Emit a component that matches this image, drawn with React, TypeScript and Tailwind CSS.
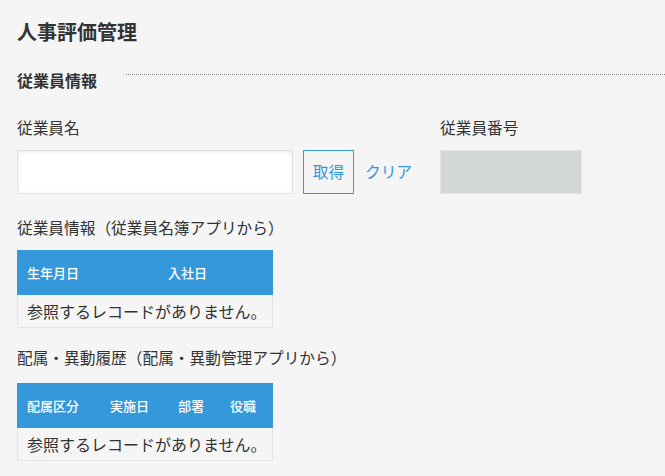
import React from 'react';

const font = { fontFamily: '"Noto Sans CJK JP", "Noto Sans", sans-serif' };

type RefTableProps = {
  columns: { label: string; width: string }[];
};

const RefTable = ({ columns }: RefTableProps) => {
  return (
    <div className="w-[256px]">
      <div className="flex h-[45px] items-center bg-[#3498db] pl-[10px] text-[13px] font-medium text-white">
        {columns.map((col) => (
          <div key={col.label} className={col.width}>
            {col.label}
          </div>
        ))}
      </div>
      <div className="flex h-[33px] items-center border border-t-0 border-[#e3e3e3] pl-[9px] text-[16px] text-[#333]">
        参照するレコードがありません。
      </div>
    </div>
  );
};

const App = () => {
  return (
    <div
      className="h-[476px] w-[665px] overflow-hidden bg-[#f5f5f5] pl-[17px] text-[#333]"
      style={font}
    >
      <h1 className="pt-[17px] text-[20px] font-bold leading-[30px]">人事評価管理</h1>

      <div className="mt-[22px] flex items-start">
        <h2 className="text-[16px] font-bold leading-[22px]">従業員情報</h2>
        <div className="mt-[5px] ml-[29px] flex-1 border-t border-dotted border-[#888]" />
      </div>

      <div className="mt-[26px] flex items-start">
        <div className="flex flex-col">
          <label className="text-[15.7px] leading-[22px]">従業員名</label>
          <div className="mt-[11px] flex items-center">
            <input
              className="h-[44px] w-[276px] border border-[#e3e3e3] bg-white shadow-[inset_0_1px_4px_rgba(0,0,0,0.08)] outline-none"
              type="text"
            />
            <button className="ml-[10px] h-[44px] w-[51px] border border-[#3498db] text-[15.7px] text-[#3498db]">
              取得
            </button>
            <span className="ml-[11px] text-[15.7px] text-[#3498db]">クリア</span>
          </div>
        </div>
        <div className="ml-[28px] flex flex-col">
          <label className="text-[15.7px] leading-[22px]">従業員番号</label>
          <div className="mt-[11px] h-[44px] w-[142px] border border-[#e3e3e3] bg-[#d4d7d7]" />
        </div>
      </div>

      <div className="mt-[22px] text-[15.7px] leading-[24px]">従業員情報（従業員名簿アプリから）</div>
      <div className="mt-[10px]">
        <RefTable
          columns={[
            { label: '生年月日', width: 'w-[141px]' },
            { label: '入社日', width: 'w-[100px]' },
          ]}
        />
      </div>

      <div className="mt-[18px] text-[15.7px] leading-[24px]">配属・異動履歴（配属・異動管理アプリから）</div>
      <div className="mt-[13px]">
        <RefTable
          columns={[
            { label: '配属区分', width: 'w-[83px]' },
            { label: '実施日', width: 'w-[68px]' },
            { label: '部署', width: 'w-[52px]' },
            { label: '役職', width: 'w-[40px]' },
          ]}
        />
      </div>
    </div>
  );
};

export default App;
